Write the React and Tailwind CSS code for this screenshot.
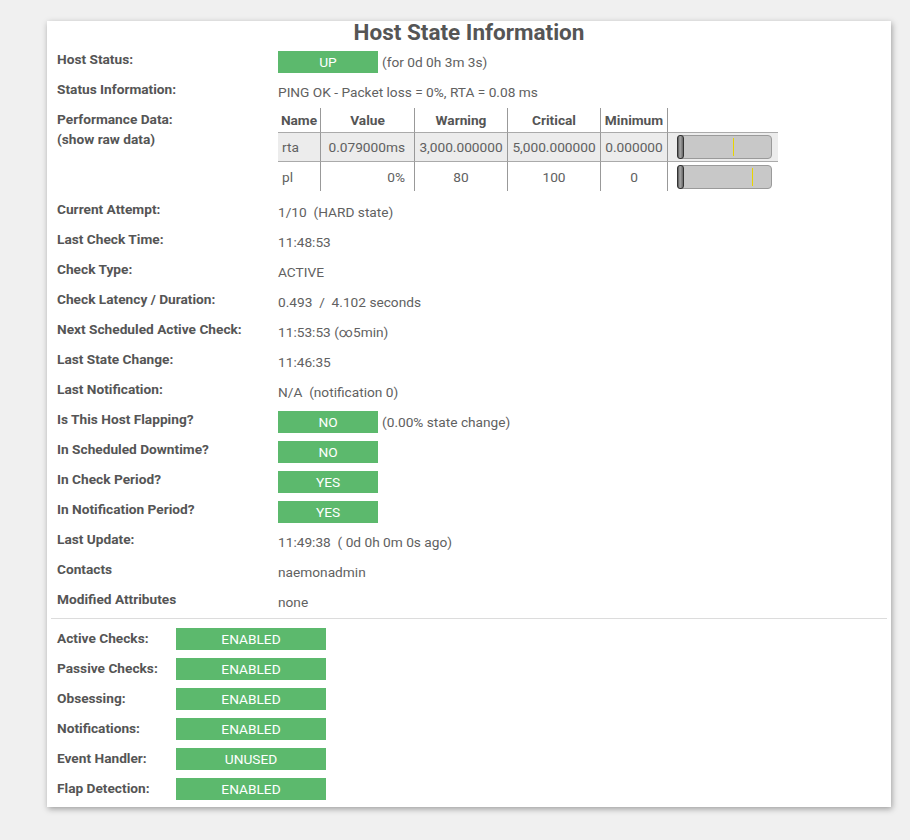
import React from "react";

const F = { fontFamily: "Roboto, 'Noto Sans', sans-serif" };

function Badge({ children, w = "w-[100px]" }) {
  return (
    <span className={`inline-flex ${w} h-[22px] items-center justify-center bg-[#5cb96d] text-white text-[13.7px] leading-[22px] shrink-0`}>
      {children}
    </span>
  );
}

function Row({ label, children, h = "h-[30px]" }) {
  return (
    <div className={`flex ${h}`}>
      <div className="w-[221px] shrink-0 -mt-[2px] text-[13.7px] leading-[20px] font-bold text-[#555]">{label}</div>
      <div className="flex items-start text-[13.7px] leading-[22px] text-[#616161] whitespace-pre">{children}</div>
    </div>
  );
}

function Bar({ mark }) {
  return (
    <div className="relative w-[95px] h-[24px] rounded-[4px] border border-[#9a9a9a] bg-[#c8c8c8]">
      <div className="absolute left-[-1px] top-[-1px] w-[7px] h-[24px] rounded-[3px] border border-[#333] bg-[linear-gradient(to_right,#555,#aaa_40%,#666)]" />
      <div className="absolute top-[2px] bottom-[2px] w-px bg-[#e8d400]" style={{ left: mark }} />
    </div>
  );
}

function PerfTable() {
  const cell = "flex items-center border-r border-[#999]";
  return (
    <div className="-mt-[3px] grid grid-cols-[43px_94px_93px_93px_67px_110px] text-[13.7px] text-[#616161]">
      {["Name", "Value", "Warning", "Critical", "Minimum"].map((h) => (
        <div key={h} className={`${cell} h-[24px] justify-center font-bold text-[#555]`}>{h}</div>
      ))}
      <div className="h-[24px]" />
      {[
        ["rta", "0.079000ms", "3,000.000000", "5,000.000000", "0.000000", 55, true],
        ["pl", "0%", "80", "100", "0", 74, false],
      ].map((r) => (
        <React.Fragment key={r[0]}>
          <div className={`${cell} ${r[6] ? "h-[29px] bg-[#ececec]" : "h-[30px]"} border-t border-t-[#aaa] px-[4px]`}>{r[0]}</div>
          <div className={`${cell} ${r[6] ? "h-[29px] bg-[#ececec]" : "h-[30px]"} border-t border-t-[#aaa] justify-end pr-[9px]`}>{r[1]}</div>
          <div className={`${cell} ${r[6] ? "h-[29px] bg-[#ececec]" : "h-[30px]"} border-t border-t-[#aaa] justify-center`}>{r[2]}</div>
          <div className={`${cell} ${r[6] ? "h-[29px] bg-[#ececec]" : "h-[30px]"} border-t border-t-[#aaa] justify-center`}>{r[3]}</div>
          <div className={`${cell} ${r[6] ? "h-[29px] bg-[#ececec]" : "h-[30px]"} border-t border-t-[#aaa] justify-center`}>{r[4]}</div>
          <div className={`flex items-center ${r[6] ? "h-[29px] bg-[#ececec]" : "h-[30px]"} border-t border-t-[#aaa] pl-[9px]`}>
            <Bar mark={r[5]} />
          </div>
        </React.Fragment>
      ))}
    </div>
  );
}

function Row2({ label, value }) {
  return (
    <div className="flex h-[30px] last:h-[22px]">
      <div className="w-[119px] shrink-0 text-[13.7px] leading-[20px] font-bold text-[#555]">{label}</div>
      <Badge w="w-[150px]">{value}</Badge>
    </div>
  );
}

export default function App() {
  return (
    <div style={F} className="min-h-screen bg-[#f0f0f0] pt-[21px] pl-[47px]">
      <div className="w-[844px] bg-white shadow-[1px_2px_6px_rgba(0,0,0,0.35)] pb-[7px]">
        <h2 className="text-center text-[22.5px] leading-[23px] font-bold text-[#555]">Host State Information</h2>
        <div className="mt-[7px] px-[10px]">
          <Row label="Host Status:">
            <Badge>UP</Badge>
            <span className="ml-[4px]">(for 0d 0h 3m 3s)</span>
          </Row>
          <Row label="Status Information:">PING OK - Packet loss = 0%, RTA = 0.08 ms</Row>
          <Row label={<>Performance Data:<br />(show raw data)</>} h="h-[90px]">
            <PerfTable />
          </Row>
          <Row label="Current Attempt:">{"1/10  (HARD state)"}</Row>
          <Row label="Last Check Time:">11:48:53</Row>
          <Row label="Check Type:">ACTIVE</Row>
          <Row label="Check Latency / Duration:">{"0.493  /  4.102 seconds"}</Row>
          <Row label="Next Scheduled Active Check:">11:53:53 (∞5min)</Row>
          <Row label="Last State Change:">11:46:35</Row>
          <Row label="Last Notification:">{"N/A  (notification 0)"}</Row>
          <Row label="Is This Host Flapping?">
            <Badge>NO</Badge>
            <span className="ml-[4px]">(0.00% state change)</span>
          </Row>
          <Row label="In Scheduled Downtime?"><Badge>NO</Badge></Row>
          <Row label="In Check Period?"><Badge>YES</Badge></Row>
          <Row label="In Notification Period?"><Badge>YES</Badge></Row>
          <Row label="Last Update:">{"11:49:38  ( 0d 0h 0m 0s ago)"}</Row>
          <Row label="Contacts">naemonadmin</Row>
          <Row label="Modified Attributes" h="h-[27px]">none</Row>
        </div>
        <div className="mx-[4px] h-px bg-[#dcdcdc]" />
        <div className="pt-[9px] px-[10px]">
          <Row2 label="Active Checks:" value="ENABLED" />
          <Row2 label="Passive Checks:" value="ENABLED" />
          <Row2 label="Obsessing:" value="ENABLED" />
          <Row2 label="Notifications:" value="ENABLED" />
          <Row2 label="Event Handler:" value="UNUSED" />
          <Row2 label="Flap Detection:" value="ENABLED" />
        </div>
      </div>
    </div>
  );
}
